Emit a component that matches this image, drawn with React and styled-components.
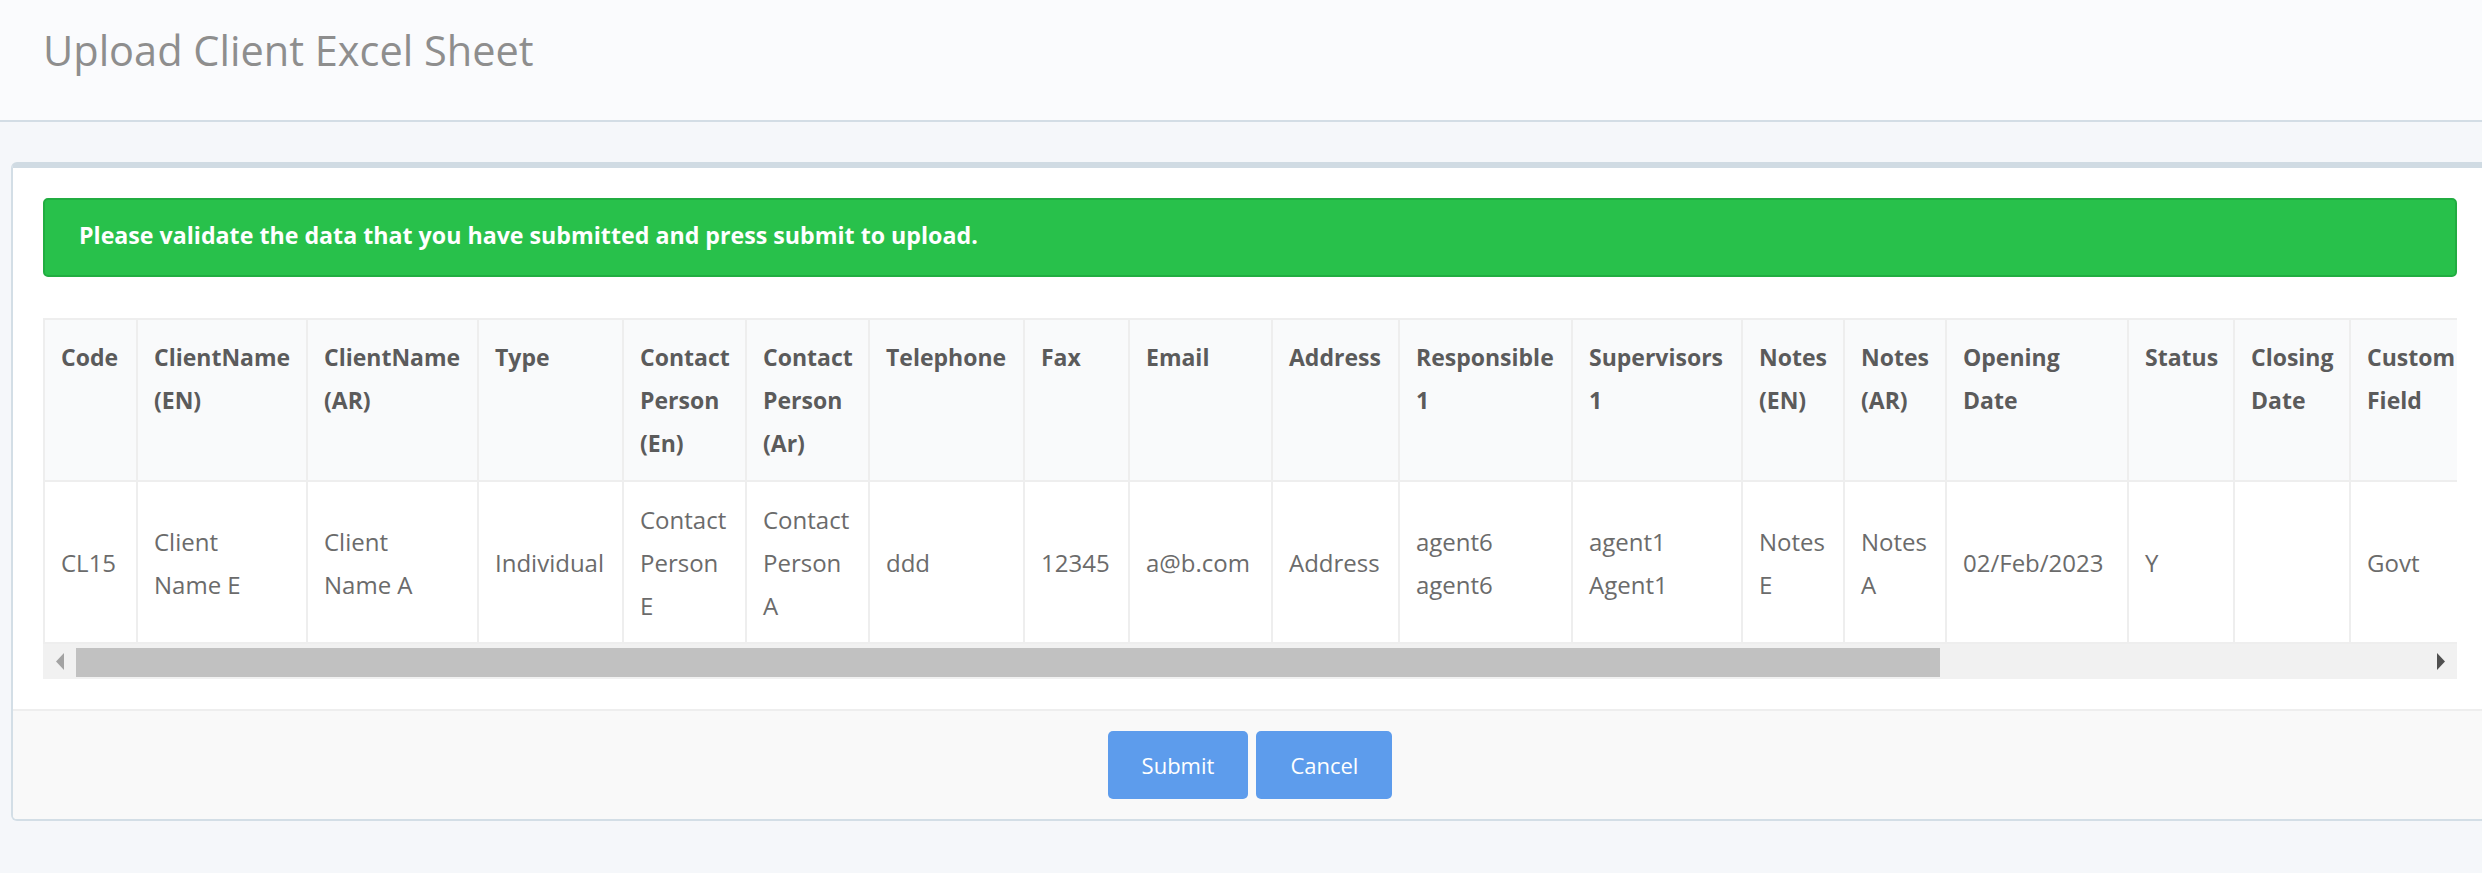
import React, { useLayoutEffect, useRef, useState } from "react";
import styled, { createGlobalStyle } from "styled-components";

const GlobalStyle = createGlobalStyle`
  html, body {
    margin: 0;
    padding: 0;
    background: #f5f7fa;
    overflow-x: hidden;
  }
  body {
    font-family: "Open Sans", "Liberation Sans", Arial, sans-serif;
  }
  * { box-sizing: border-box; }
`;

const Page = styled.div`
  min-height: 873px;
  background: #f5f7fa;
`;

const PageHeader = styled.header`
  height: 122px;
  padding: 27px 43px 0;
  background: #fafbfd;
  border-bottom: 2px solid #d3dde5;
`;

const Title = styled.h1`
  margin: 0;
  font-size: 41.5px;
  font-weight: 400;
  line-height: 46px;
  color: #8e8e8e;
`;

const Content = styled.main`
  padding: 40px 0 0 11px;
`;

const Card = styled.section`
  width: 2478px;
  background: #ffffff;
  border: 2px solid #d3dee6;
  border-top: 6px solid #d0dbe3;
  border-radius: 6px;
  overflow: hidden;
`;

const CardBody = styled.div`
  padding: 30px 30px 30px;
`;

const Alert = styled.div`
  background: #28c14b;
  border: 2px solid #21ad41;
  border-radius: 5px;
  color: #ffffff;
  font-weight: 700;
  font-size: 23.2px;
  line-height: 33px;
  padding: 19px 34px 23px;
  margin-bottom: 41px;
`;

const TableScroll = styled.div`
  overflow-x: auto;
  scrollbar-width: none;
  &::-webkit-scrollbar { display: none; }
`;

const Table = styled.table`
  border-collapse: collapse;
  table-layout: fixed;
`;

const Th = styled.th`
  border: 2px solid #eeeeee;
  padding: 16px 16px 15px;
  text-align: left;
  vertical-align: top;
  font-weight: 700;
  font-size: 23px;
  line-height: 43px;
  color: #5b5b5b;
  background: #f9fafb;
`;

const Td = styled.td`
  border: 2px solid #eeeeee;
  padding: 16px 16px 15px;
  text-align: left;
  vertical-align: middle;
  font-size: 24px;
  line-height: 43px;
  color: #6b6b6b;
  background: #ffffff;
`;

const ScrollBar = styled.div`
  display: flex;
  height: 35px;
  background: #f1f1f1;
`;

const ArrowButton = styled.button`
  width: 33px;
  flex: 0 0 33px;
  border: none;
  padding: 0;
  background: transparent;
  display: flex;
  align-items: center;
  justify-content: center;
  cursor: pointer;
`;

const Track = styled.div`
  flex: 1;
  position: relative;
`;

const Thumb = styled.div`
  position: absolute;
  top: 4px;
  height: 29px;
  background: #c1c1c1;
`;

const CardFooter = styled.div`
  background: #f9f9f9;
  border-top: 2px solid #eeeeee;
  padding: 20px;
  display: flex;
  justify-content: center;
  gap: 8px;
`;

const Button = styled.button`
  height: 68px;
  padding: 0 34px;
  background: #5d9cec;
  color: #ffffff;
  border: none;
  border-radius: 5px;
  font-family: inherit;
  font-size: 22px;
  cursor: pointer;
`;

const columns = [
  { label: "Code", width: 93 },
  { label: "ClientName (EN)", width: 170 },
  { label: "ClientName (AR)", width: 171 },
  { label: "Type", width: 145 },
  { label: "Contact Person (En)", width: 123 },
  { label: "Contact Person (Ar)", width: 123 },
  { label: "Telephone", width: 155 },
  { label: "Fax", width: 105 },
  { label: "Email", width: 143 },
  { label: "Address", width: 127 },
  { label: "Responsible 1", width: 173 },
  { label: "Supervisors 1", width: 170 },
  { label: "Notes (EN)", width: 102 },
  { label: "Notes (AR)", width: 102 },
  { label: "Opening Date", width: 182 },
  { label: "Status", width: 106 },
  { label: "Closing Date", width: 116 },
  { label: "Custom Field", width: 125 },
  { label: "Custom Field 2", width: 200 },
  { label: "Custom Field 3", width: 200 },
  { label: "Custom Field 4", width: 207 },
];

const rows = [
  [
    "CL15",
    "Client Name E",
    "Client Name A",
    "Individual",
    "Contact Person E",
    "Contact Person A",
    "ddd",
    "12345",
    "a@b.com",
    "Address",
    "agent6 agent6",
    "agent1 Agent1",
    "Notes E",
    "Notes A",
    "02/Feb/2023",
    "Y",
    "",
    "Govt",
    "",
    "",
    "",
  ],
];

const tableWidth = columns.reduce((s, c) => s + c.width, 0);

function Arrow({ dir, color }) {
  return (
    <svg width="8" height="17" viewBox="0 0 8 17" aria-hidden="true">
      {dir === "left" ? (
        <polygon points="8,0 8,17 0,8.5" fill={color} />
      ) : (
        <polygon points="0,0 0,17 8,8.5" fill={color} />
      )}
    </svg>
  );
}

export default function App() {
  const scrollRef = useRef(null);
  const trackRef = useRef(null);
  const [bar, setBar] = useState({ ratio: 0.7946, pos: 0, track: 2348 });

  const measure = () => {
    const el = scrollRef.current;
    const tr = trackRef.current;
    if (!el || !tr) return;
    const ratio = el.clientWidth / el.scrollWidth;
    const max = el.scrollWidth - el.clientWidth;
    const pos = max > 0 ? el.scrollLeft / max : 0;
    setBar({ ratio, pos, track: tr.clientWidth });
  };

  useLayoutEffect(() => {
    measure();
    window.addEventListener("resize", measure);
    return () => window.removeEventListener("resize", measure);
  }, []);

  const scrollBy = (d) => {
    if (scrollRef.current) scrollRef.current.scrollLeft += d;
  };

  const thumbW = bar.track * bar.ratio;
  const thumbLeft = (bar.track - thumbW) * bar.pos;
  const atStart = bar.pos <= 0.001;
  const atEnd = bar.pos >= 0.999;

  return (
    <Page>
      <GlobalStyle />
      <PageHeader>
        <Title>Upload Client Excel Sheet</Title>
      </PageHeader>
      <Content>
        <Card>
          <CardBody>
            <Alert>
              Please validate the data that you have submitted and press submit to upload.
            </Alert>
            <TableScroll ref={scrollRef} onScroll={measure}>
              <Table style={{ width: tableWidth }}>
                <colgroup>
                  {columns.map((c) => (
                    <col key={c.label} style={{ width: c.width }} />
                  ))}
                </colgroup>
                <thead>
                  <tr>
                    {columns.map((c) => (
                      <Th key={c.label}>{c.label}</Th>
                    ))}
                  </tr>
                </thead>
                <tbody>
                  {rows.map((r, i) => (
                    <tr key={i}>
                      {r.map((v, j) => (
                        <Td key={j}>{v}</Td>
                      ))}
                    </tr>
                  ))}
                </tbody>
              </Table>
            </TableScroll>
            <ScrollBar>
              <ArrowButton onClick={() => scrollBy(-120)} aria-label="Scroll left">
                <Arrow dir="left" color={atStart ? "#a3a3a3" : "#505050"} />
              </ArrowButton>
              <Track ref={trackRef}>
                <Thumb style={{ width: thumbW, left: thumbLeft }} />
              </Track>
              <ArrowButton onClick={() => scrollBy(120)} aria-label="Scroll right">
                <Arrow dir="right" color={atEnd ? "#a3a3a3" : "#505050"} />
              </ArrowButton>
            </ScrollBar>
          </CardBody>
          <CardFooter>
            <Button>Submit</Button>
            <Button>Cancel</Button>
          </CardFooter>
        </Card>
      </Content>
    </Page>
  );
}
